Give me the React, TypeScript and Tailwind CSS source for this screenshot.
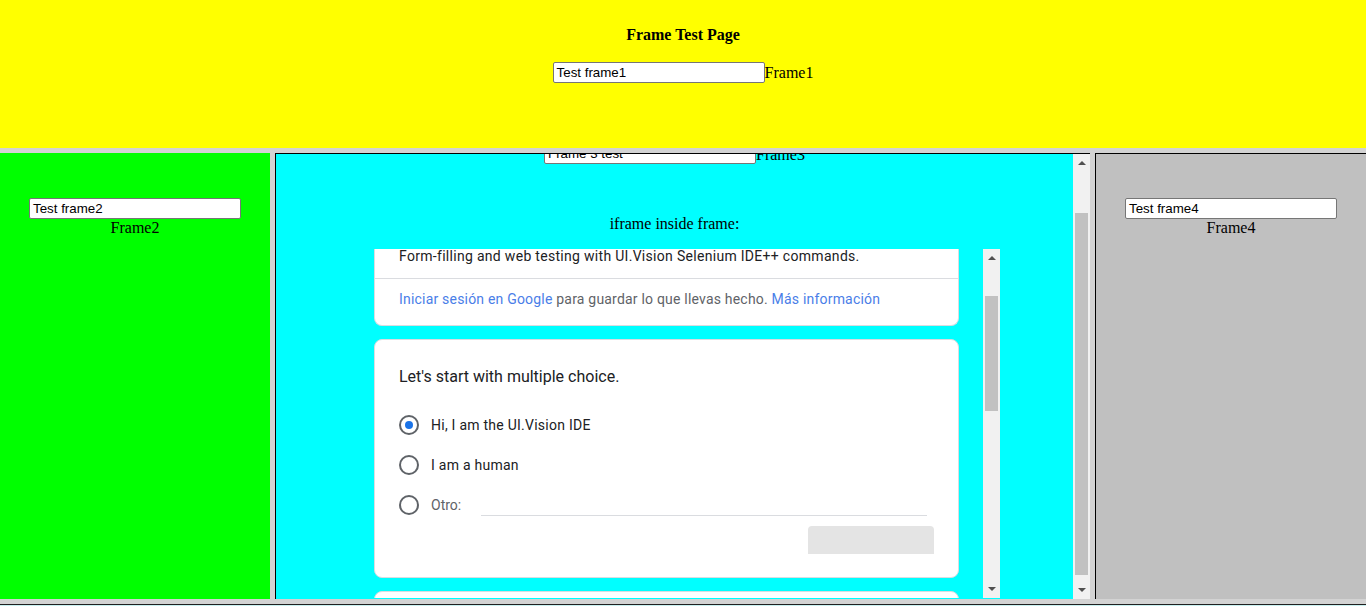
import React from "react";

const serif = { fontFamily: '"Liberation Serif", "Times New Roman", serif' };
const sans = { fontFamily: '"Liberation Sans", Arial, sans-serif' };
const roboto = { fontFamily: 'Roboto, "Noto Sans", Arial, sans-serif' };

function TextBox({ value }: { value: string }) {
    return (
        <div
            style={sans}
            className="w-[212px] h-[21px] shrink-0 bg-white border border-[#767676] rounded-[2px] px-[3px] text-[13.33px] leading-[19px] text-black overflow-hidden whitespace-nowrap"
        >
            {value}
        </div>
    );
}

function Arrow({ up }: { up?: boolean }) {
    return (
        <svg width="8" height="5" viewBox="0 0 8 5" className="block">
            <path d={up ? "M0 5 L4 1 L8 5 Z" : "M0 0 L8 0 L4 4 Z"} fill="#505050" />
        </svg>
    );
}

function Scrollbar({ thumbTop, thumbHeight, width }: { thumbTop: number; thumbHeight: number; width: string }) {
    return (
        <div className={`${width} shrink-0 bg-[#f1f1f1] flex flex-col items-center relative`}>
            <div className="h-[17px] flex items-center justify-center">
                <Arrow up />
            </div>
            <div
                className="absolute left-[2px] right-[2px] bg-[#c1c1c1]"
                style={{ top: thumbTop, height: thumbHeight }}
            />
            <div className="mt-auto h-[17px] flex items-center justify-center">
                <Arrow />
            </div>
        </div>
    );
}

function Radio({ checked }: { checked?: boolean }) {
    return (
        <span className="w-[20px] h-[20px] shrink-0 rounded-full border-2 border-[#5f6368] flex items-center justify-center">
            {checked && <span className="w-[8px] h-[8px] rounded-full bg-[#1a73e8]" />}
        </span>
    );
}

function FormFrame() {
    return (
        <div className="flex h-[349px] w-[626px] ml-[98px] overflow-hidden" style={roboto}>
            <div className="flex-1 overflow-hidden pr-[24px]">
                {/* card cut off by scroll */}
                <div className="bg-white border-x border-b border-[#dadce0] rounded-b-lg">
                    <p className="-mt-[3px] px-[24px] pb-[12px] text-[14px] leading-[20px] tracking-[0.3px] text-[#202124]">
                        Form-filling and web testing with UI.Vision Selenium IDE++ commands.
                    </p>
                    <div className="border-t border-[#dadce0] px-[24px] pt-[10px] pb-[16px] text-[14px] leading-[20px] tracking-[0.2px] text-[#5f6368]">
                        <span className="text-[#4a7ee8]">Iniciar sesión en Google</span> para guardar lo que llevas hecho.{" "}
                        <span className="text-[#4a7ee8]">Más información</span>
                    </div>
                </div>

                <div className="mt-[13px] bg-white border border-[#dadce0] rounded-lg px-[24px] pt-[25px] pb-[23px]">
                    <div className="text-[16px] leading-[24px] text-[#202124]">Let's start with multiple choice.</div>
                    <div className="mt-[16px] flex flex-col">
                        <div className="h-[40px] flex items-center gap-[12px]">
                            <Radio checked />
                            <span className="text-[14px] tracking-[0.25px] text-[#202124]">Hi, I am the UI.Vision IDE</span>
                        </div>
                        <div className="h-[40px] flex items-center gap-[12px]">
                            <Radio />
                            <span className="text-[14px] tracking-[0.25px] text-[#202124]">I am a human</span>
                        </div>
                        <div className="h-[40px] flex items-center">
                            <Radio />
                            <span className="ml-[12px] text-[14px] text-[#5f6368]">Otro:</span>
                            <div className="ml-[20px] mr-[7px] flex-1 h-[22px] mb-[1px] border-b border-[#dadce0]" />
                        </div>
                    </div>
                    <div className="mt-[1px] flex justify-end">
                        <div className="w-[126px] h-[28px] bg-[#e4e4e4] rounded-t-[4px]" />
                    </div>
                </div>

                <div className="mt-[13px] h-[100px] bg-white border border-[#dadce0] rounded-t-lg" />
            </div>
            <Scrollbar width="w-[17px]" thumbTop={47} thumbHeight={115} />
        </div>
    );
}

export default function App() {
    return (
        <div className="w-[1366px] h-[606px] overflow-hidden flex flex-col bg-[#d3d3d3]">
            {/* Frame1 */}
            <div className="h-[148px] shrink-0 bg-[#ffff00] flex flex-col items-center pt-[26px]" style={serif}>
                <div className="text-[16px] leading-[18px] font-bold text-black">Frame Test Page</div>
                <div className="mt-[18px] flex items-end">
                    <TextBox value="Test frame1" />
                    <span className="text-[16px] leading-[18px] mb-[1px] text-black">Frame1</span>
                </div>
            </div>

            <div className="h-[5px] shrink-0" />

            <div className="h-[446px] shrink-0 flex">
                {/* Frame2 */}
                <div className="w-[270px] shrink-0 bg-[#00ff00] flex flex-col items-center pt-[45px]" style={serif}>
                    <TextBox value="Test frame2" />
                    <span className="text-[16px] leading-[18px] text-black">Frame2</span>
                </div>

                <div className="w-[5px] shrink-0" />

                {/* Frame3 */}
                <div className="w-[815px] shrink-0 flex flex-col border-l border-t border-black">
                    <div className="flex-1 flex overflow-hidden">
                        <div className="flex-1 bg-[#00ffff] overflow-hidden" style={serif}>
                            <div className="-mt-[11px] flex flex-col">
                                <div className="flex items-end ml-[268px]">
                                    <TextBox value="Frame 3 test" />
                                    <span className="text-[16px] leading-[18px] text-black">Frame3</span>
                                </div>
                                <div className="mt-[51px] text-center text-[16px] leading-[18px] text-black">
                                    iframe inside frame:
                                </div>
                                <div className="mt-[16px]">
                                    <FormFrame />
                                </div>
                            </div>
                        </div>
                        <Scrollbar width="w-[17px]" thumbTop={59} thumbHeight={362} />
                    </div>
                </div>

                <div className="w-[5px] shrink-0" />

                {/* Frame4 */}
                <div className="flex-1 bg-[#c0c0c0] border-l border-t border-black flex flex-col items-center pt-[44px]" style={serif}>
                    <TextBox value="Test frame4" />
                    <span className="text-[16px] leading-[18px] text-black">Frame4</span>
                </div>
            </div>

            <div className="h-[5px] shrink-0" />
            <div className="h-[1px] shrink-0 bg-[#202020]" />
            <div className="h-[1px] shrink-0 bg-[#c8f0f0]" />
        </div>
    );
}
